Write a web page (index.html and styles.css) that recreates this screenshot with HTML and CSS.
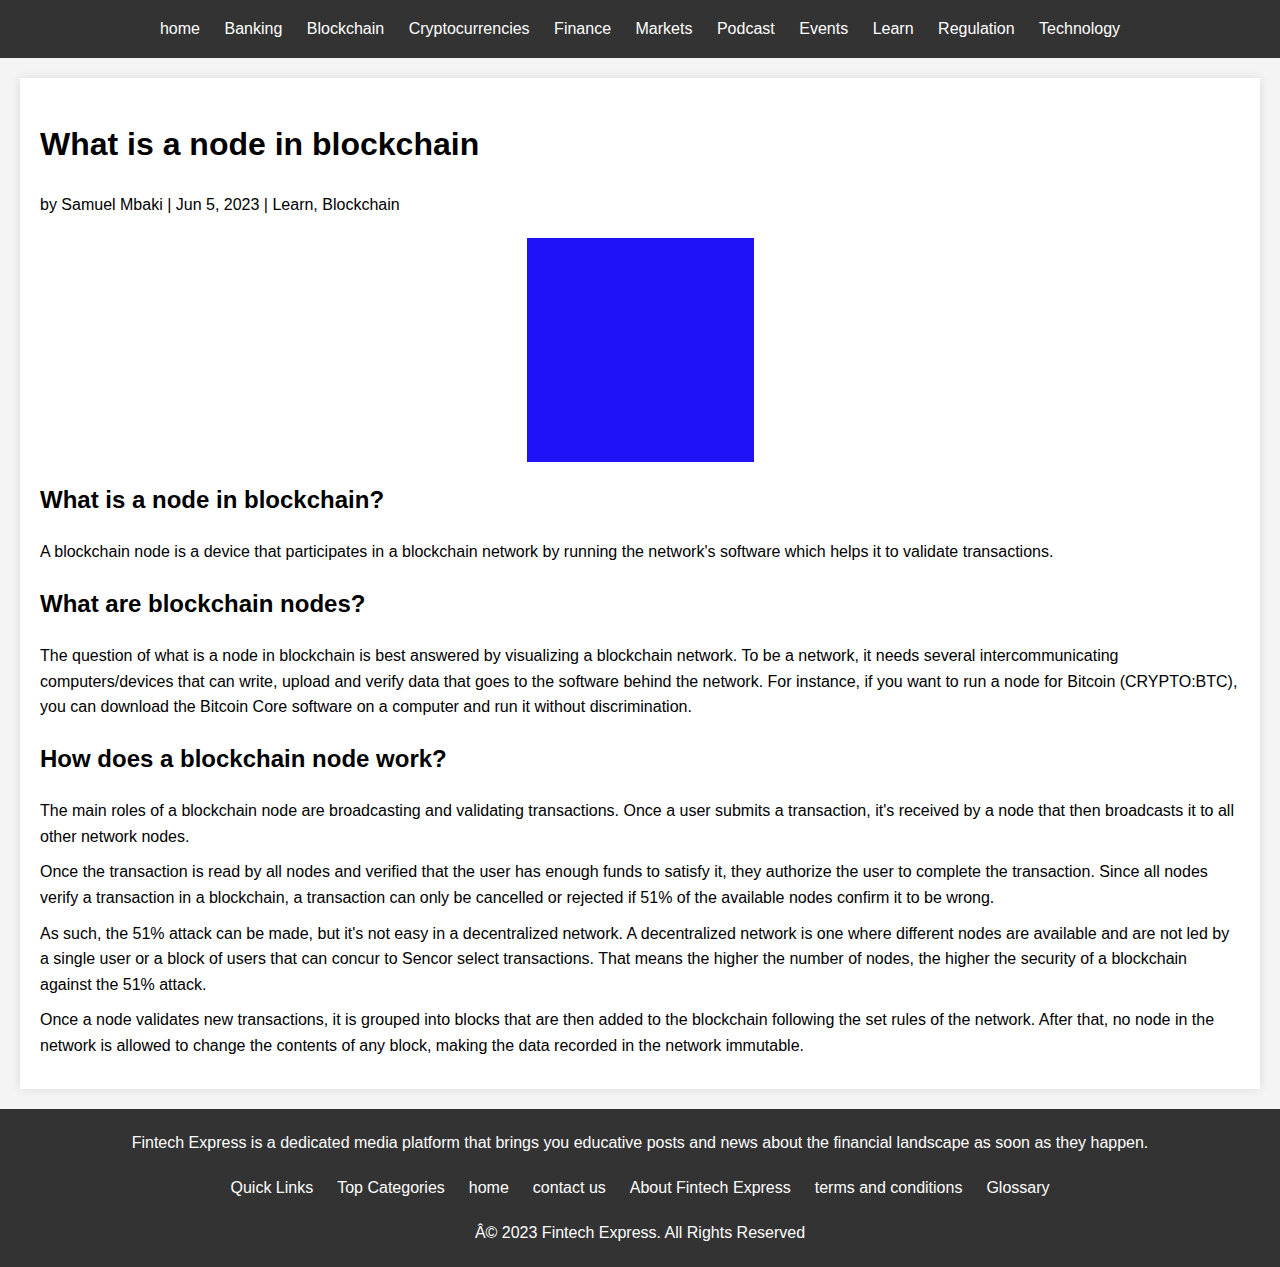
FILE: index.html
```html
<!DOCTYPE html>
<html lang="en">
<head>
<meta charset="utf-8">
<title>What is a node in blockchain</title>
<link rel="stylesheet" href="styles.css">
</head>
<body>
<nav class="topnav">
  <a href="#">home</a>
  <a href="#">Banking</a>
  <a href="#">Blockchain</a>
  <a href="#">Cryptocurrencies</a>
  <a href="#">Finance</a>
  <a href="#">Markets</a>
  <a href="#">Podcast</a>
  <a href="#">Events</a>
  <a href="#">Learn</a>
  <a href="#">Regulation</a>
  <a href="#">Technology</a>
</nav>
<main class="card">
  <h1 class="title">What is a node in blockchain</h1>
  <p class="meta">by Samuel Mbaki | Jun 5, 2023 | Learn, Blockchain</p>
  <div class="hero"></div>
  <h2>What is a node in blockchain?</h2>
  <p>A blockchain node is a device that participates in a blockchain network by running the network's software which helps it to validate transactions.</p>
  <h2>What are blockchain nodes?</h2>
  <p>The question of what is a node in blockchain is best answered by visualizing a blockchain network. To be a network, it needs several intercommunicating computers/devices that can write, upload and verify data that goes to the software behind the network. For instance, if you want to run a node for Bitcoin (CRYPTO:BTC), you can download the Bitcoin Core software on a computer and run it without discrimination.</p>
  <h2>How does a blockchain node work?</h2>
  <p>The main roles of a blockchain node are broadcasting and validating transactions. Once a user submits a transaction, it's received by a node that then broadcasts it to all other network nodes.</p>
  <p>Once the transaction is read by all nodes and verified that the user has enough funds to satisfy it, they authorize the user to complete the transaction. Since all nodes verify a transaction in a blockchain, a transaction can only be cancelled or rejected if 51% of the available nodes confirm it to be wrong.</p>
  <p>As such, the 51% attack can be made, but it's not easy in a decentralized network. A decentralized network is one where different nodes are available and are not led by a single user or a block of users that can concur to Sencor select transactions. That means the higher the number of nodes, the higher the security of a blockchain against the 51% attack.</p>
  <p>Once a node validates new transactions, it is grouped into blocks that are then added to the blockchain following the set rules of the network. After that, no node in the network is allowed to change the contents of any block, making the data recorded in the network immutable.</p>
</main>
<footer class="footer">
  <p>Fintech Express is a dedicated media platform that brings you educative posts and news about the financial landscape as soon as they happen.</p>
  <div class="footlinks">
    <a href="#">Quick Links</a>
    <a href="#">Top Categories</a>
    <a href="#">home</a>
    <a href="#">contact us</a>
    <a href="#">About Fintech Express</a>
    <a href="#">terms and conditions</a>
    <a href="#">Glossary</a>
  </div>
  <p>Â© 2023 Fintech Express. All Rights Reserved</p>
</footer>
</body>
</html>
```

FILE: styles.css
```css
* { box-sizing: border-box; }
html, body {
  margin: 0;
  padding: 0;
}
body {
  background: #f4f4f4;
  font-family: "Liberation Sans", Arial, sans-serif;
  font-size: 16px;
  line-height: 1.6;
  color: #000;
}
.topnav {
  background: #333;
  padding: 16px 0;
  display: flex;
  justify-content: center;
  gap: 24.5px;
}
.topnav a {
  color: #fff;
  text-decoration: none;
}
.card {
  display: block;
  margin: 20px;
  padding: 20px;
  background: #fff;
  box-shadow: 0 0 10px rgba(0, 0, 0, 0.1);
}
.title {
  font-size: 32px;
  font-weight: bold;
  margin: 21.44px 0;
}
h2 {
  font-size: 24px;
  font-weight: bold;
  margin: 19.92px 0;
}
p {
  margin: 10px 0;
}
.meta {
  margin: 16px 0 0;
}
.hero {
  width: 227px;
  height: 224px;
  margin: 21px auto -1px;
  background: #1e12f6;
}
.footer {
  background: #333;
  color: #fff;
  text-align: center;
  padding: 21px 20px 22px;
  display: flex;
  flex-direction: column;
  gap: 19.5px;
}
.footer p {
  margin: 0;
}
.footlinks {
  display: flex;
  justify-content: center;
  gap: 24px;
}
.footlinks a {
  color: #fff;
  text-decoration: none;
}
```
